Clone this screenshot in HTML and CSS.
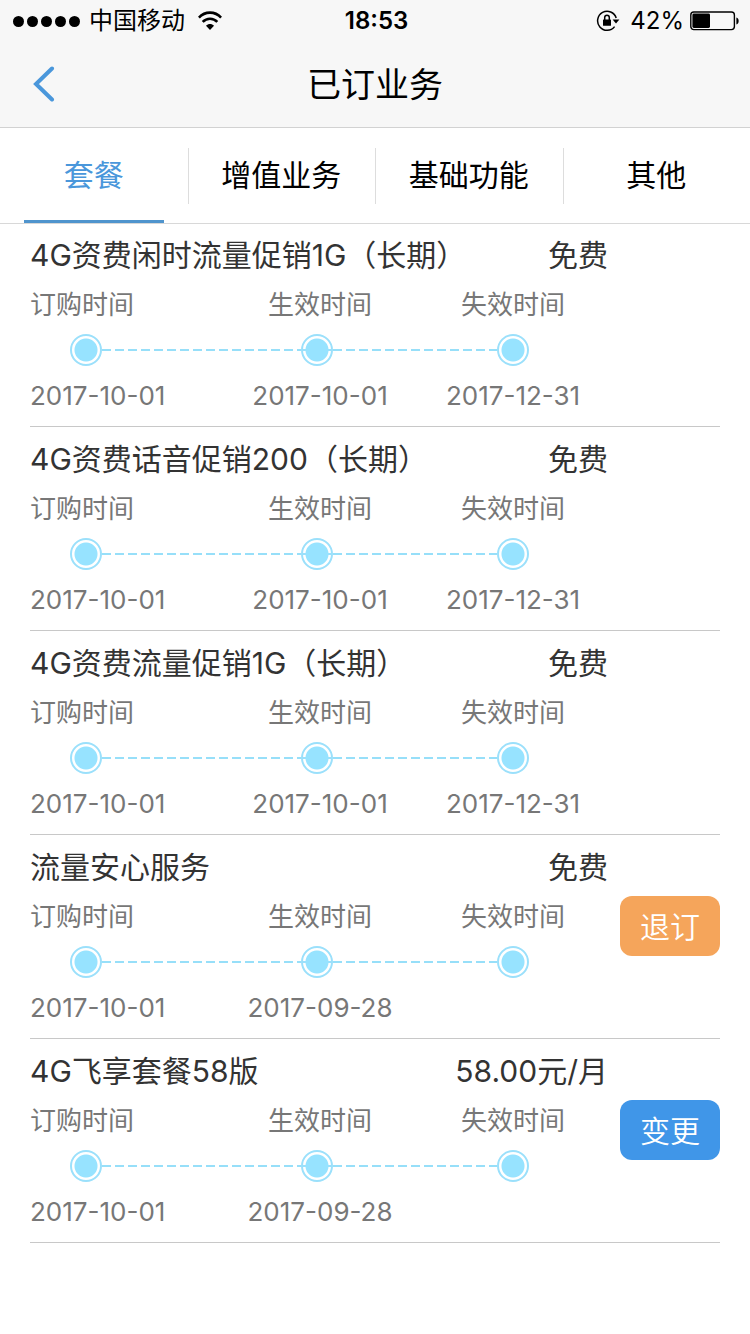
FILE: index.html
```html
<!DOCTYPE html>
<html lang="zh-CN">
<head>
    <meta charset="UTF-8">
    <meta name="viewport" content="width=device-width, initial-scale=1.0">
    <title>已订业务</title>
    <link rel="stylesheet" href="styles.css">
</head>
<body>
    <header class="header">
        <div class="status-bar">
            <div class="status-left">
                <span class="signal"><i></i><i></i><i></i><i></i><i></i></span>
                <span>中国移动</span>
                <svg class="wifi" width="24" height="20" viewBox="0 0 24 20" fill="none" stroke="#000" stroke-width="2.6">
                    <path d="M0.9 6.6C7 0 17 0 23.1 6.6"/>
                    <path d="M4.7 10.9C8.8 6.6 15.2 6.6 19.3 10.9"/>
                    <path d="M12 19L8 14.8C10.2 12.4 13.8 12.4 16 14.8Z" fill="#000" stroke="none"/>
                </svg>
            </div>
            <span class="time">18:53</span>
            <div class="status-right">
                <svg width="24" height="22" viewBox="0 0 24 22" fill="none" stroke="#000">
                    <path d="M20.2 8A9.5 9.5 0 1 0 18.6 16.6" stroke-width="1.5"/>
                    <path d="M16.6 9.6H23.4L20 13.4Z" fill="#000" stroke="none"/>
                    <rect x="7" y="9.4" width="8" height="6.4" rx="0.6" fill="#000" stroke="none"/>
                    <path d="M8.7 10V7.6a2.3 2.3 0 0 1 4.6 0V10" stroke-width="1.5"/>
                </svg>
                <span class="percent">42%</span>
                <svg width="50" height="20" viewBox="0 0 50 20">
                    <rect x="0.8" y="1" width="43.6" height="17.6" rx="3" fill="none" stroke="#000" stroke-width="1.4"/>
                    <rect x="2.4" y="2.6" width="17.6" height="14.4" rx="1.4"/>
                    <path d="M46.4 6.4C49.4 7 49.4 12.8 46.4 13.4Z"/>
                </svg>
            </div>
        </div>
        <div class="title-bar">
            <a class="back" href="#" aria-label="返回">
                <svg width="22" height="36" viewBox="0 0 22 36" fill="none" stroke="#4a97db" stroke-width="4" stroke-linecap="round">
                    <path d="M19 2.5L3 18L19 33.5"/>
                </svg>
            </a>
            <h1>已订业务</h1>
        </div>
    </header>

    <nav class="tabs">
        <a class="tab active" href="#">套餐</a>
        <a class="tab" href="#">增值业务</a>
        <a class="tab" href="#">基础功能</a>
        <a class="tab" href="#">其他</a>
    </nav>

    <ul class="list">
        <li class="item">
            <div class="info">
                <div class="row"><h2>4G资费闲时流量促销1G（长期）</h2><span class="price">免费</span></div>
                <div class="cols labels"><span>订购时间</span><span>生效时间</span><span>失效时间</span></div>
                <div class="timeline"><i class="dot"></i><i class="line"></i><i class="dot mid"></i><i class="line short"></i><i class="dot"></i></div>
                <div class="cols"><span>2017-10-01</span><span>2017-10-01</span><span>2017-12-31</span></div>
            </div>
            <div class="action"></div>
        </li>
        <li class="item">
            <div class="info">
                <div class="row"><h2>4G资费话音促销200（长期）</h2><span class="price">免费</span></div>
                <div class="cols labels"><span>订购时间</span><span>生效时间</span><span>失效时间</span></div>
                <div class="timeline"><i class="dot"></i><i class="line"></i><i class="dot mid"></i><i class="line short"></i><i class="dot"></i></div>
                <div class="cols"><span>2017-10-01</span><span>2017-10-01</span><span>2017-12-31</span></div>
            </div>
            <div class="action"></div>
        </li>
        <li class="item">
            <div class="info">
                <div class="row"><h2>4G资费流量促销1G（长期）</h2><span class="price">免费</span></div>
                <div class="cols labels"><span>订购时间</span><span>生效时间</span><span>失效时间</span></div>
                <div class="timeline"><i class="dot"></i><i class="line"></i><i class="dot mid"></i><i class="line short"></i><i class="dot"></i></div>
                <div class="cols"><span>2017-10-01</span><span>2017-10-01</span><span>2017-12-31</span></div>
            </div>
            <div class="action"></div>
        </li>
        <li class="item">
            <div class="info">
                <div class="row"><h2>流量安心服务</h2><span class="price">免费</span></div>
                <div class="cols labels"><span>订购时间</span><span>生效时间</span><span>失效时间</span></div>
                <div class="timeline"><i class="dot"></i><i class="line"></i><i class="dot mid"></i><i class="line short"></i><i class="dot"></i></div>
                <div class="cols"><span>2017-10-01</span><span>2017-09-28</span><span></span></div>
            </div>
            <div class="action"><button class="cancel">退订</button></div>
        </li>
        <li class="item">
            <div class="info">
                <div class="row"><h2>4G飞享套餐58版</h2><span class="price">58.00元/月</span></div>
                <div class="cols labels"><span>订购时间</span><span>生效时间</span><span>失效时间</span></div>
                <div class="timeline"><i class="dot"></i><i class="line"></i><i class="dot mid"></i><i class="line short"></i><i class="dot"></i></div>
                <div class="cols"><span>2017-10-01</span><span>2017-09-28</span><span></span></div>
            </div>
            <div class="action"><button class="change">变更</button></div>
        </li>
    </ul>
</body>
</html>
```
FILE: styles.css
```css
* {
    box-sizing: border-box;
}

body {
    margin: 0;
    font-family: Inter, "Noto Sans CJK SC", sans-serif;
    background-color: #fff;
    color: #000;
}

h1, h2 {
    margin: 0;
    font-weight: 400;
}

a {
    color: inherit;
    text-decoration: none;
}

/* Header */
.header {
    background-color: #f7f7f7;
    border-bottom: 1px solid #d2d2d2;
}

.status-bar {
    display: grid;
    grid-template-columns: 1fr auto 1fr;
    align-items: center;
    height: 40px;
    padding: 0 10px 0 13px;
    font-size: 24px;
    line-height: 42px;
}

.status-left,
.status-right {
    display: flex;
    align-items: center;
    height: 40px;
}

.status-left {
    gap: 9px;
}

.status-right {
    justify-content: flex-end;
    gap: 6px;
}

.signal {
    display: flex;
    gap: 3px;
}

.signal i {
    width: 11px;
    height: 11px;
    border-radius: 50%;
    background-color: #000;
}

.wifi {
    margin-left: 4px;
}

.time {
    font-weight: 600;
}

.percent {
    margin-left: 4px;
}

.title-bar {
    display: grid;
    grid-template-columns: 60px 1fr 60px;
    align-items: center;
    height: 87px;
}

.back {
    display: flex;
    justify-content: flex-end;
    padding-right: 5px;
}

.title-bar h1 {
    padding-top: 2px;
    text-align: center;
    font-size: 34px;
    line-height: 48px;
}

/* Tabs */
.tabs {
    display: flex;
    height: 96px;
    border-bottom: 1px solid #d8d8d8;
}

.tab {
    position: relative;
    flex: 1;
    text-align: center;
    font-size: 30px;
    line-height: 95px;
}

.tab + .tab::before {
    content: "";
    position: absolute;
    left: 0;
    top: 20px;
    bottom: 19px;
    border-left: 1px solid #ddd;
}

.tab.active {
    color: #4a97db;
}

.tab.active::after {
    content: "";
    position: absolute;
    left: 24px;
    right: 24px;
    bottom: 0;
    height: 3px;
    background-color: #4f94cd;
}

/* List */
.list {
    list-style: none;
    margin: -1px 30px 0;
    padding: 0;
}

.item {
    display: flex;
    gap: 12px;
    padding: 8px 0 6px;
    border-bottom: 1px solid #c8c8c8;
}

.info {
    flex: 1;
}

.row {
    display: flex;
    justify-content: space-between;
    font-size: 30px;
    line-height: 48px;
    color: #333;
}

.row h2 {
    font-size: 30px;
}

.cols {
    display: grid;
    grid-template-columns: 192fr 196fr 190fr;
    font-size: 26px;
    line-height: 48px;
    color: #777;
    text-align: center;
}

.cols.labels {
    line-height: 52px;
}

.cols span:first-child {
    text-align: left;
}

.timeline {
    display: flex;
    align-items: center;
    padding: 3px 79px 6px 40px;
}

.dot {
    width: 32px;
    height: 32px;
    border: 2px solid #9be0fb;
    border-radius: 50%;
    background: radial-gradient(circle, #97e3ff 11px, transparent 12px);
}

.dot.mid {
    background: radial-gradient(circle, #97e3ff 11px, transparent 12px),
        linear-gradient(#9be0fb, #9be0fb) center / 100% 2px no-repeat;
}

.line {
    flex: 200;
    height: 2px;
    background: repeating-linear-gradient(to right, #97dff9 0 9px, transparent 9px 13px);
}

.line.short {
    flex: 165;
}

.action {
    width: 100px;
    padding-top: 53px;
}

.action button {
    width: 100%;
    height: 60px;
    padding: 0 0 2px;
    border: none;
    border-radius: 12px;
    font-family: inherit;
    font-size: 30px;
    font-weight: 350;
    color: #fff;
    cursor: pointer;
}

.cancel {
    background-color: #f5a55b;
}

.change {
    background-color: #4096e8;
}
```
